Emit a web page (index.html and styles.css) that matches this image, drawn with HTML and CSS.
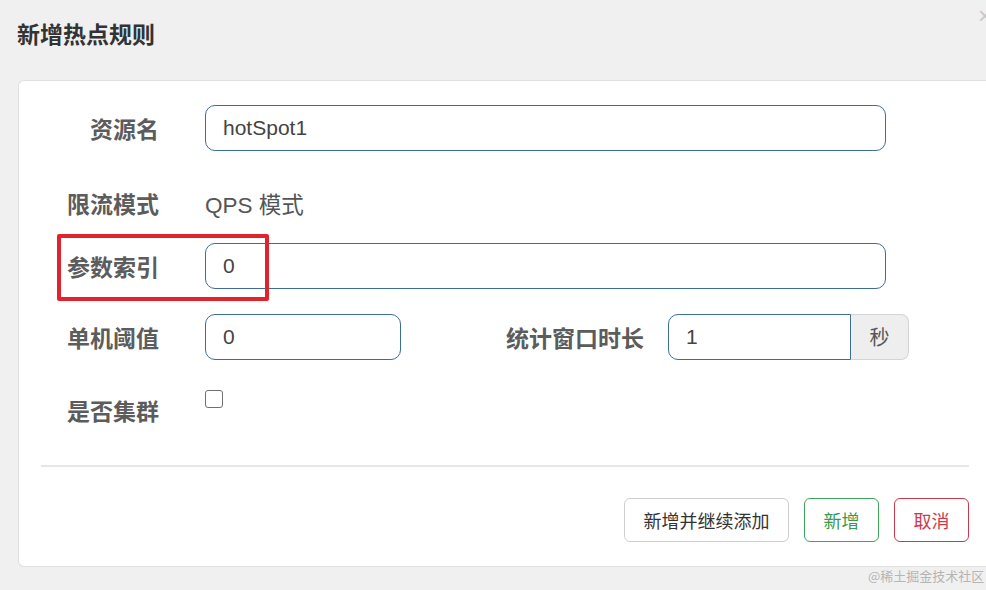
FILE: index.html
```html
<!DOCTYPE html>
<html lang="zh">
<head>
<meta charset="utf-8">
<link rel="stylesheet" href="styles.css">
</head>
<body>
<div class="dialog">
  <div class="header">
    <h1 class="title">新增热点规则</h1>
    <span class="close">×</span>
  </div>
  <div class="card">
    <div class="row row-1">
      <label class="label">资源名</label>
      <div class="input wide">hotSpot1</div>
    </div>
    <div class="row row-2">
      <label class="label">限流模式</label>
      <div class="static">QPS 模式</div>
    </div>
    <div class="row row-3">
      <label class="label">参数索引</label>
      <div class="input wide">0</div>
      <div class="highlight"></div>
    </div>
    <div class="row row-4">
      <label class="label">单机阈值</label>
      <div class="input short">0</div>
      <label class="label label-2">统计窗口时长</label>
      <div class="group">
        <div class="input group-input">1</div>
        <div class="addon">秒</div>
      </div>
    </div>
    <div class="row row-5">
      <label class="label">是否集群</label>
      <span class="checkbox"></span>
    </div>
    <div class="divider"></div>
    <div class="actions">
      <button class="btn btn-default">新增并继续添加</button>
      <button class="btn btn-success">新增</button>
      <button class="btn btn-danger">取消</button>
    </div>
  </div>
  <div class="watermark">@稀土掘金技术社区</div>
</div>
</body>
</html>
```

FILE: styles.css
```css
html, body {
  margin: 0;
  padding: 0;
  background: #f0f0f0;
  overflow: hidden;
  width: 986px;
  height: 590px;
}
body {
  font-family: "Liberation Sans", "Noto Sans CJK SC", sans-serif;
  color: #444;
}
.dialog {
  position: relative;
  width: 986px;
  height: 590px;
}
.header {
  position: relative;
  height: 81px;
}
.title {
  margin: 0;
  padding: 18px 0 0 17px;
  font-family: "Noto Sans CJK SC", sans-serif;
  font-size: 23px;
  font-weight: 700;
  color: #333;
  line-height: 30px;
}
.close {
  position: absolute;
  right: -6px;
  top: 2px;
  font-size: 24px;
  color: #c8c8c8;
  font-family: "Liberation Sans", sans-serif;
}
.card {
  margin-left: 18px;
  width: 928px;
  padding: 24px 22px 24px 22px;
  background: #fff;
  border: 1px solid #e0e0e0;
  border-right: none;
  border-radius: 6px 0 0 6px;
  box-sizing: content-box;
  margin-top: -1px;
}
.row {
  position: relative;
  display: flex;
  align-items: center;
  height: 46px;
}
.row-1 { margin-bottom: 29px; }
.row-2 { margin-bottom: 17px; }
.row-3 { margin-bottom: 25px; }
.row-4 { margin-bottom: 27px; }
.row-5 { margin-bottom: 32px; align-items: flex-start; }
.label {
  width: 118px;
  flex: none;
  text-align: right;
  font-family: "Noto Sans CJK SC", sans-serif;
  font-weight: 700;
  font-size: 23px;
  color: #5c5c5c;
  margin-right: 46px;
  line-height: 46px;
  white-space: nowrap;
}
.row-5 .label { line-height: 46px; }
.label-2 {
  width: 243px;
  margin-right: 24px;
}
.input {
  box-sizing: border-box;
  height: 46px;
  border: 1.5px solid #3d6d99;
  border-radius: 10px;
  padding: 0 17px;
  font-size: 21px;
  line-height: 43px;
  color: #444;
  background: #fff;
}
.wide { width: 681px; }
.short { width: 196px; }
.static {
  font-size: 22.5px;
  color: #555;
  font-family: "Liberation Sans", "Noto Sans CJK SC", sans-serif;
}
.group {
  display: flex;
  width: 241px;
}
.group-input {
  width: 183px;
  border-radius: 10px 0 0 10px;
}
.addon {
  box-sizing: border-box;
  width: 58px;
  height: 46px;
  background: #eeeeee;
  border: 1px solid #d4d4d4;
  border-left: none;
  border-radius: 0 8px 8px 0;
  text-align: center;
  line-height: 44px;
  font-family: "Noto Sans CJK SC", sans-serif;
  font-size: 20px;
  color: #555;
}
.checkbox {
  display: block;
  box-sizing: border-box;
  width: 18px;
  height: 18px;
  margin-top: 3px;
  border: 1.5px solid #707070;
  border-radius: 3px;
  background: #fff;
}
.highlight {
  position: absolute;
  left: 16px;
  top: -9px;
  width: 212px;
  height: 67px;
  box-sizing: border-box;
  border: 4px solid #e1242c;
  border-radius: 2px;
}
.divider {
  height: 2px;
  background: #e6e6e6;
  margin-bottom: 31px;
}
.actions {
  display: flex;
  justify-content: flex-end;
  gap: 15px;
}
.btn {
  box-sizing: border-box;
  height: 44px;
  padding: 0;
  border-radius: 6px;
  background: #fff;
  font-family: "Noto Sans CJK SC", sans-serif;
  font-size: 18px;
  line-height: 40px;
  cursor: pointer;
}
.btn-default {
  width: 165px;
  border: 1.5px solid #cfcfcf;
  color: #333;
}
.btn-success {
  width: 75px;
  border: 1.5px solid #3fa55a;
  color: #3b9a4f;
}
.btn-danger {
  width: 75px;
  border: 1.5px solid #c9394a;
  color: #d0394a;
}
.watermark {
  position: absolute;
  left: 868px;
  top: 566px;
  font-family: "Noto Sans CJK SC", sans-serif;
  font-size: 13px;
  color: #b5b5b5;
  white-space: nowrap;
}
```
